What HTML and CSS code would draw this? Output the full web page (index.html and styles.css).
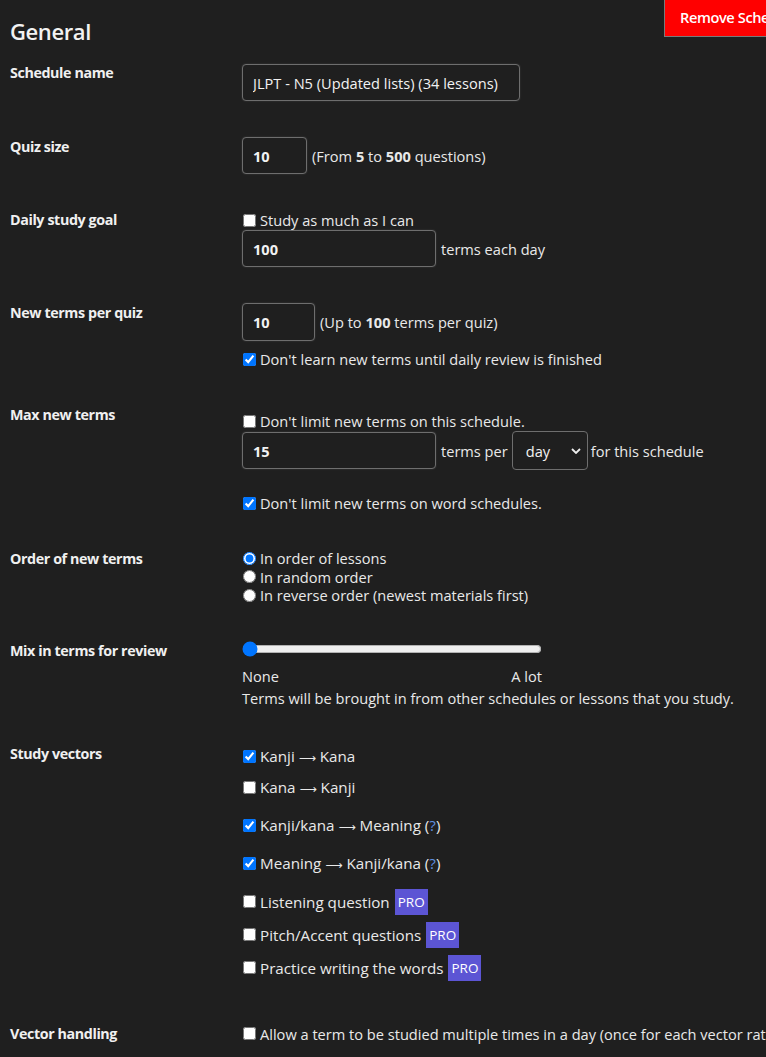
FILE: index.html
```html
<!DOCTYPE html>
<html lang="en">

<head>
    <meta charset="UTF-8">
    <meta name="viewport" content="width=device-width, initial-scale=1.0">
    <title>Schedule settings</title>
    <link rel="stylesheet" href="styles.css">
</head>

<body>
    <div class="header">
        <h2>General</h2>
        <button type="button" class="remove-btn">Remove Schedule</button>
    </div>

    <div class="row">
        <div class="label">Schedule name</div>
        <div class="field">
            <input type="text" class="text-input name-input" value="JLPT - N5 (Updated lists) (34 lessons)">
        </div>
    </div>

    <div class="row">
        <div class="label">Quiz size</div>
        <div class="field">
            <div class="inline">
                <input type="text" class="text-input num small" value="10">
                <span>(From <b>5</b> to <b>500</b> questions)</span>
            </div>
        </div>
    </div>

    <div class="row">
        <div class="label">Daily study goal</div>
        <div class="field">
            <label class="check"><input type="checkbox"><span>Study as much as I can</span></label>
            <div class="inline">
                <input type="text" class="text-input num wide" value="100">
                <span>terms each day</span>
            </div>
        </div>
    </div>

    <div class="row">
        <div class="label">New terms per quiz</div>
        <div class="field">
            <div class="inline">
                <input type="text" class="text-input num medium" value="10">
                <span>(Up to <b>100</b> terms per quiz)</span>
            </div>
            <label class="check spaced"><input type="checkbox" checked><span>Don't learn new terms until daily review is finished</span></label>
        </div>
    </div>

    <div class="row">
        <div class="label">Max new terms</div>
        <div class="field">
            <label class="check top"><input type="checkbox"><span>Don't limit new terms on this schedule.</span></label>
            <div class="inline">
                <input type="text" class="text-input num wide" value="15">
                <span>terms per</span>
                <select class="period">
                    <option>day</option>
                    <option>week</option>
                </select>
                <span>for this schedule</span>
            </div>
            <label class="check gap-top"><input type="checkbox" checked><span>Don't limit new terms on word schedules.</span></label>
        </div>
    </div>

    <div class="row">
        <div class="label">Order of new terms</div>
        <div class="field">
            <label class="radio"><input type="radio" name="order" checked><span>In order of lessons</span></label>
            <label class="radio"><input type="radio" name="order"><span>In random order</span></label>
            <label class="radio"><input type="radio" name="order"><span>In reverse order (newest materials first)</span></label>
        </div>
    </div>

    <div class="row">
        <div class="label">Mix in terms for review</div>
        <div class="field">
            <input type="range" class="slider" min="0" max="100" value="0">
            <div class="slider-labels">
                <span>None</span>
                <span>A lot</span>
            </div>
            <p class="note">Terms will be brought in from other schedules or lessons that you study.</p>
        </div>
    </div>

    <div class="row">
        <div class="label">Study vectors</div>
        <div class="field vectors">
            <label class="check"><input type="checkbox" checked><span>Kanji <span class="arrow">⟶</span> Kana</span></label>
            <label class="check v2"><input type="checkbox"><span>Kana <span class="arrow">⟶</span> Kanji</span></label>
            <label class="check v3"><input type="checkbox" checked><span>Kanji/kana <span class="arrow">⟶</span> Meaning (<a href="#">?</a>)</span></label>
            <label class="check v3"><input type="checkbox" checked><span>Meaning <span class="arrow">⟶</span> Kanji/kana (<a href="#">?</a>)</span></label>
            <label class="check v3"><input type="checkbox"><span>Listening question</span><span class="pro">PRO</span></label>
            <label class="check v4"><input type="checkbox"><span>Pitch/Accent questions</span><span class="pro">PRO</span></label>
            <label class="check v4"><input type="checkbox"><span>Practice writing the words</span><span class="pro">PRO</span></label>
        </div>
    </div>

    <div class="row last">
        <div class="label">Vector handling</div>
        <div class="field">
            <label class="check"><input type="checkbox"><span>Allow a term to be studied multiple times in a day (once for each vector rather than once per term)</span></label>
        </div>
    </div>
</body>

</html>
```

FILE: styles.css
```css
html,
body {
    overflow: hidden;
}

body {
    font-family: "Open Sans", "Noto Sans", sans-serif;
    font-size: 14.6px;
    margin: 0;
    padding: 0 10px;
    background-color: #1f1f1f;
    color: #e9e9e9;
}

.header {
    display: flex;
    justify-content: space-between;
    align-items: flex-start;
    height: 63px;
}

.header h2 {
    margin: 16px 0 0;
    font-size: 22px;
    line-height: 30px;
    font-weight: 600;
    color: #f2f2f2;
    letter-spacing: -0.4px;
}

.remove-btn {
    width: 170px;
    margin-right: -78px;
    height: 37px;
    padding: 0 0 2px 15px;
    text-align: left;
    background-color: #ff0000;
    color: #ffffff;
    border: 1px solid #7a7a7a;
    border-top: none;
    font-family: inherit;
    font-size: 14.6px;
    font-weight: 600;
    letter-spacing: -0.4px;
    white-space: nowrap;
}

.row {
    display: grid;
    grid-template-columns: 232px 1fr;
    margin-bottom: 36px;
}

.label {
    font-weight: 700;
    font-size: 14.3px;
    line-height: 20px;
    color: #f0f0f0;
    letter-spacing: -0.4px;
}

.field {
    display: flex;
    flex-direction: column;
    align-items: flex-start;
}

.inline {
    display: flex;
    align-items: center;
    gap: 5px;
}

.text-input {
    box-sizing: border-box;
    height: 37px;
    padding: 0 10px;
    background-color: #1f1f1f;
    color: #f2f2f2;
    border: 1px solid #6e6e6e;
    border-radius: 4px;
    font-family: inherit;
    font-size: 14.6px;
    box-shadow: 0 0 2px rgba(255, 255, 255, 0.15);
}

.name-input {
    width: 278px;
    margin-top: 1px;
}

.num {
    font-weight: 700;
}

.small {
    width: 65px;
}

.medium {
    width: 73px;
    height: 38px;
}

.wide {
    width: 194px;
}

b {
    font-weight: 700;
}

.check,
.radio {
    display: flex;
    align-items: center;
    line-height: 20px;
    white-space: nowrap;
}

.radio {
    line-height: 18.5px;
}

.check input,
.radio input {
    margin: 0 4px 0 1px;
    width: 13px;
    height: 13px;
    flex-shrink: 0;
}

.spaced {
    margin-top: 8px;
}

.top {
    margin-top: 6px;
}

.gap-top {
    margin-top: 23px;
}

.period {
    box-sizing: border-box;
    width: 76px;
    height: 39px;
    margin: 0 -2px 0 -1px;
    padding: 0 0 0 13px;
    appearance: none;
    background-color: #1f1f1f;
    background-image: url("data:image/svg+xml;utf8,<svg xmlns='http://www.w3.org/2000/svg' width='10' height='6' viewBox='0 0 10 6'><path d='M1 1l4 4 4-4' fill='none' stroke='%23eeeeee' stroke-width='1.8'/></svg>");
    background-repeat: no-repeat;
    background-position: right 6px center;
    color: #f2f2f2;
    border: 1px solid #6e6e6e;
    border-radius: 4px;
    font-family: inherit;
    font-size: 14.6px;
}

.slider {
    width: 300px;
    margin: 0;
    height: 16px;
}

.slider-labels {
    display: flex;
    justify-content: space-between;
    width: 300px;
    margin-top: 9px;
    line-height: 20px;
}

.note {
    margin: 2px 0 0;
    line-height: 20px;
}

.vectors {
    font-size: 15.2px;
}

.vectors .check {
    min-height: 26px;
}

.arrow {
    font-family: "DejaVu Sans", sans-serif;
    font-size: 12px;
}

.v2 {
    margin-top: 5px;
}

.v3 {
    margin-top: 12px;
}

.v4 {
    margin-top: 7px;
}

a {
    color: #5e8fe0;
    text-decoration: none;
}

.pro {
    display: inline-flex;
    align-items: center;
    height: 26px;
    margin-left: 5px;
    padding: 0 3px;
    font-size: 13.5px;
    background-color: #5c55d4;
    color: #ffffff;
}

.last {
    margin-top: 43px;
}
```
